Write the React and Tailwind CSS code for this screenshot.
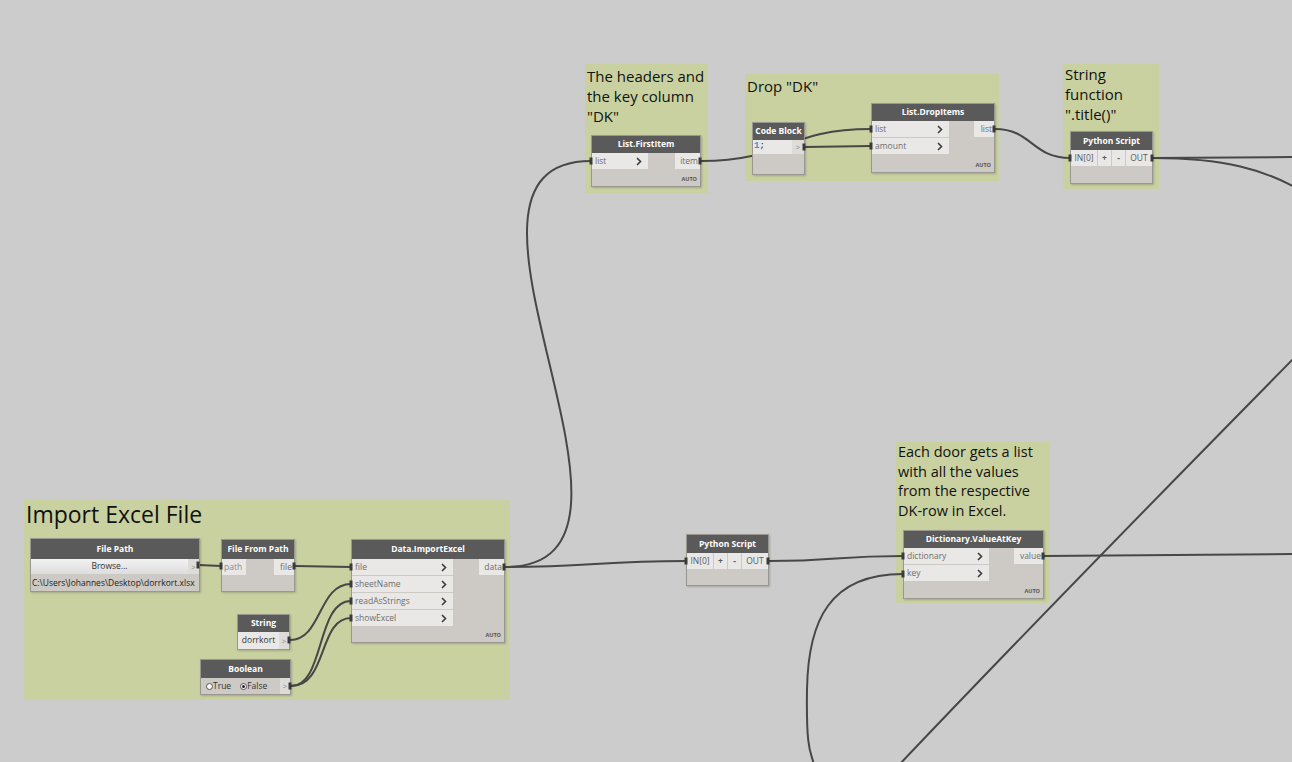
// Dynamo graph: Excel import -> dictionary lookup
const sans = "font-['Open_Sans','Noto_Sans',sans-serif]";

function Chevron({ light }) {
  return (
    <svg width="6" height="9" viewBox="0 0 6 9" className="shrink-0">
      <path d="M1 1 L4.5 4.5 L1 8" fill="none" stroke={light ? '#8a8a8a' : '#3c3c3c'} strokeWidth={light ? 1 : 1.6} />
    </svg>
  );
}

function Node({ pos, title, head = 'h-[18px]', children }) {
  return (
    <div className={`absolute ${pos} border border-[#9a9792] bg-[#cdc9c4] shadow-[1px_1px_2px_rgba(0,0,0,0.2)] ${sans}`}>
      <div className={`${head} flex items-center justify-center bg-[#5a5a5a] text-[8.5px] font-bold text-white`}>{title}</div>
      {children}
    </div>
  );
}

function InPort({ label, w }) {
  return (
    <div className={`flex h-[16px] items-center justify-between bg-[#e9e8e6] pl-[3px] pr-[6px] text-[8.5px] text-[#6d6d6d] ${w}`}>
      <span>{label}</span>
      <Chevron />
    </div>
  );
}

function OutPort({ label, w }) {
  return (
    <div className={`flex h-[16px] items-center justify-end bg-[#e9e8e6] pr-[2px] text-[8.5px] text-[#6d6d6d] ${w}`}>
      {label}
    </div>
  );
}

function Auto() {
  return <div className="absolute bottom-[3px] right-[3px] text-[5.5px] font-bold text-[#555]">AUTO</div>;
}

function Group({ pos, text, size = 'text-[15px] leading-[20px] pt-[2px]' }) {
  return (
    <div className={`absolute ${pos} bg-[#c9d1a1] ${sans}`}>
      <div className={`${size} whitespace-pre px-[2px] text-[#111]`}>{text}</div>
    </div>
  );
}

function PyNode({ pos }) {
  return (
    <Node pos={pos} title="Python Script">
      <div className="flex gap-px text-[8.5px] text-[#5a5a5a]">
        <div className="flex h-[16px] w-[26px] items-center justify-center bg-[#e9e8e6]">IN[0]</div>
        <div className="flex h-[16px] w-[13px] items-center justify-center bg-[#e9e8e6] font-bold">+</div>
        <div className="flex h-[16px] w-[13px] items-center justify-center bg-[#e9e8e6] font-bold">-</div>
        <div className="flex h-[16px] w-[26px] items-center justify-center bg-[#e9e8e6]">OUT</div>
      </div>
    </Node>
  );
}

const wires = [
  'M199 565 L221 566',
  'M295 566 L351 567',
  'M290 640 C 322 640 318 584 351 584',
  'M291 686 C 325 686 316 601 351 601',
  'M291 686 C 328 686 318 618 351 618',
  'M505 567 C 690 567 410 161 591 161',
  'M505 567 C 590 567 600 561 686 561',
  'M701 161 C 786 161 786 129 871 129',
  'M805 147 L871 146',
  'M995 129 C 1032 129 1032 158 1070 158',
  'M1153 158 L1300 157',
  'M1153 158 C 1225 158 1265 170 1300 190',
  'M769 561 C 836 561 836 556 903 556',
  'M1044 556 L1300 554',
  'M903 574 C 830 574 808 620 807 690 S 812 750 815 770',
  'M898 766 C 1030 627 1170 484 1300 352',
];

const ticks = [
  [198, 565], [221, 566], [294, 566], [351, 567], [351, 584], [351, 601], [351, 618], [504, 567],
  [289, 640], [290, 686], [591, 161], [700, 161], [804, 147], [871, 129], [871, 146], [994, 129],
  [1070, 158], [1152, 158], [686, 561], [768, 561], [903, 556], [903, 574], [1043, 556],
];

export default function App() {
  return (
    <div className="relative h-[762px] w-[1292px] overflow-hidden bg-[#cccccc]">
      <Group pos="left-[24px] top-[500px] w-[486px] h-[200px]" text="Import Excel File" size="text-[23px] leading-[28px]" />
      <Group pos="left-[585px] top-[64px] w-[123px] h-[129px]" text={'The headers and\nthe key column\n"DK"'} />
      <Group pos="left-[745px] top-[74px] w-[254px] h-[107px]" text={'Drop "DK"'} />
      <Group pos="left-[1063px] top-[64px] w-[96px] h-[125px]" text={'String\nfunction\n".title()"'} size="text-[15px] leading-[20px]" />
      <Group pos="left-[896px] top-[442px] w-[154px] h-[161px]" text={'Each door gets a list\nwith all the values\nfrom the respective\nDK-row in Excel.'} size="text-[14.5px] leading-[19.5px]" />

      <svg className="absolute inset-0" width="1292" height="762">
        {wires.map((d, i) => (
          <path key={i} d={d} fill="none" stroke="#474747" strokeWidth="2" />
        ))}
      </svg>

      <Node pos="left-[30px] top-[538px] w-[170px] h-[54px]" title="File Path" head="h-[20px]">
        <div className="flex">
          <div className="flex h-[15px] flex-1 items-center justify-center bg-gradient-to-b from-[#f2f2f2] to-[#dddddd] text-[8.5px] text-[#333]">Browse...</div>
          <div className="flex h-[15px] w-[11px] items-center justify-center bg-[#dedcd9] text-[8px] text-[#888]">&gt;</div>
        </div>
        <div className="px-[1px] pt-[3px] text-[8.5px] text-[#222]">C:\Users\Johannes\Desktop\dorrkort.xlsx</div>
      </Node>

      <Node pos="left-[221px] top-[539px] w-[74px] h-[53px]" title="File From Path" head="h-[19px]">
        <div className="flex justify-between">
          <div className="flex h-[16px] w-[24px] items-center bg-[#e9e8e6] pl-[2px] text-[8.5px] text-[#8a8a8a]">path</div>
          <OutPort label="file" w="w-[20px]" />
        </div>
      </Node>

      <Node pos="left-[351px] top-[539px] w-[154px] h-[104px]" title="Data.ImportExcel" head="h-[19px]">
        <div className="flex justify-between">
          <div className="flex flex-col gap-px">
            <InPort label="file" w="w-[101px]" />
            <InPort label="sheetName" w="w-[101px]" />
            <InPort label="readAsStrings" w="w-[101px]" />
            <InPort label="showExcel" w="w-[101px]" />
          </div>
          <OutPort label="data" w="w-[25px]" />
        </div>
        <Auto />
      </Node>

      <Node pos="left-[237px] top-[614px] w-[53px] h-[36px]" title="String" head="h-[17px]">
        <div className="flex">
          <div className="flex h-[17px] flex-1 items-center justify-center bg-[#e9e8e6] text-[8.5px] text-[#333]">dorrkort</div>
          <div className="flex h-[17px] w-[10px] items-center justify-center bg-[#dedcd9] text-[8px] text-[#888]">&gt;</div>
        </div>
      </Node>

      <Node pos="left-[200px] top-[659px] w-[91px] h-[36px]" title="Boolean" head="h-[18px]">
        <div className="flex h-[16px] items-center text-[8.5px] text-[#333]">
          <div className="flex flex-1 items-center gap-[9px] pl-[5px]">
            <span className="flex items-center">
              <span className="inline-block h-[7px] w-[7px] rounded-full border border-[#555] bg-white" />True
            </span>
            <span className="flex items-center">
              <span className="flex h-[7px] w-[7px] items-center justify-center rounded-full border border-[#555] bg-white">
                <span className="h-[3px] w-[3px] rounded-full bg-[#222]" />
              </span>
              False
            </span>
          </div>
          <div className="flex h-[16px] w-[10px] items-center justify-center bg-[#dedcd9] text-[8px] text-[#888]">&gt;</div>
        </div>
      </Node>

      <Node pos="left-[591px] top-[135px] w-[110px] h-[52px]" title="List.FirstItem" head="h-[17px]">
        <div className="flex justify-between">
          <InPort label="list" w="w-[56px]" />
          <OutPort label="item" w="w-[25px]" />
        </div>
        <Auto />
      </Node>

      <Node pos="left-[752px] top-[122px] w-[53px] h-[53px]" title="Code Block" head="h-[17px]">
        <div className="flex">
          <div className="flex h-[14px] flex-1 items-center bg-[#e9e8e6] pl-[1px] font-['Liberation_Mono',monospace] text-[9px] text-[#222]">
            <span className="font-bold text-[#3b8fd6]">1</span>;
          </div>
          <div className="flex h-[14px] w-[12px] items-center justify-center bg-[#dedcd9] text-[8px] text-[#888]">&gt;</div>
        </div>
      </Node>

      <Node pos="left-[871px] top-[103px] w-[124px] h-[70px]" title="List.DropItems" head="h-[17px]">
        <div className="flex justify-between">
          <div className="flex flex-col gap-px">
            <InPort label="list" w="w-[77px]" />
            <InPort label="amount" w="w-[77px]" />
          </div>
          <OutPort label="list" w="w-[20px]" />
        </div>
        <Auto />
      </Node>

      <PyNode pos="left-[1070px] top-[131px] w-[83px] h-[53px]" />
      <PyNode pos="left-[686px] top-[534px] w-[83px] h-[52px]" />

      <Node pos="left-[903px] top-[530px] w-[141px] h-[69px]" title="Dictionary.ValueAtKey" head="h-[17px]">
        <div className="flex justify-between">
          <div className="flex flex-col gap-px">
            <InPort label="dictionary" w="w-[85px]" />
            <InPort label="key" w="w-[85px]" />
          </div>
          <OutPort label="value" w="w-[29px]" />
        </div>
        <Auto />
      </Node>

      <svg className="pointer-events-none absolute inset-0" width="1292" height="762">
        {ticks.map(([x, y], i) => (
          <rect key={i} x={x - 1.5} y={y - 3.5} width="3" height="7" fill="#3a3a3a" />
        ))}
      </svg>
    </div>
  );
}
